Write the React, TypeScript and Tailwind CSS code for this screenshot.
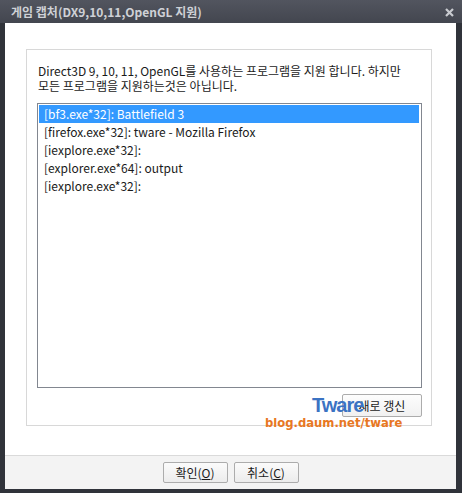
const programs = [
  { id: 1, name: "[bf3.exe*32]: Battlefield 3" },
  { id: 2, name: "[firefox.exe*32]: tware - Mozilla Firefox" },
  { id: 3, name: "[iexplore.exe*32]:" },
  { id: 4, name: "[explorer.exe*64]: output" },
  { id: 5, name: "[iexplore.exe*32]:" },
];

const kr = { fontFamily: '"Noto Sans CJK KR", "Noto Sans", sans-serif' };

export default function App() {
  const selectedId = 1;

  return (
    <div
      className="w-[462px] h-[493px] bg-[#30333a] flex flex-col relative overflow-hidden"
      style={kr}
    >
      {/* title bar */}
      <div className="h-[23px] flex items-center justify-between bg-gradient-to-b from-[#52555f] to-[#43464f] pl-[11px] pr-[8px]">
        <span className="text-[12px] font-bold text-[#cfd1d6] leading-none">
          게임 캡처(DX9,10,11,OpenGL 지원)
        </span>
        <svg width="9" height="9" viewBox="0 0 9 9" className="mt-[1px]">
          <path d="M1 1L8 8M8 1L1 8" stroke="#c9cbd0" strokeWidth="2.2" />
        </svg>
      </div>

      <div className="flex-1 flex flex-col ml-[5px] mr-[6px] mb-[4px]">
        <div className="h-[432px] bg-white pt-[26px] pl-[21px]">
          <div className="w-[406px] h-[377px] border border-[#d8d8d8] pt-[13px] pl-[10px] pr-[9px] pb-[8px] flex flex-col">
            <div className="text-[12px] leading-[15px] text-[#1a1a1a] ml-[1px]">
              <div>Direct3D 9, 10, 11, OpenGL를 사용하는 프로그램을 지원 합니다. 하지만</div>
              <div>모든 프로그램을 지원하는것은 아닙니다.</div>
            </div>
            <div className="mt-[10px] h-[285px] border border-[#828790] p-[1px] pr-[2px]">
              {programs.map((p) => (
                <div
                  key={p.id}
                  className={
                    p.id === selectedId
                      ? "h-[18px] flex items-center pl-[5px] text-[12px] bg-[#3399ff] text-white"
                      : "h-[18px] flex items-center pl-[5px] text-[12px] text-[#1a1a1a]"
                  }
                >
                  {p.name}
                </div>
              ))}
            </div>
            <div className="mt-[6px] flex justify-end">
              <button className="w-[80px] h-[23px] border border-[#acacac] rounded-[2px] bg-gradient-to-b from-[#fdfdfd] to-[#f1f1f1] text-[12px] text-[#1a1a1a]">
                새로 갱신
              </button>
            </div>
          </div>
        </div>
        <div className="h-px bg-[#dadada]" />
        <div className="flex-1 bg-[#f3f3f3] flex justify-center gap-[6px] pt-[6px]">
          <button className="w-[65px] h-[21px] border border-[#acacac] rounded-[2px] bg-gradient-to-b from-[#fbfbfb] to-[#ececec] text-[12px] text-[#1a1a1a] leading-none">
            확인(<span className="underline">O</span>)
          </button>
          <button className="w-[65px] h-[21px] border border-[#acacac] rounded-[2px] bg-gradient-to-b from-[#fbfbfb] to-[#ececec] text-[12px] text-[#1a1a1a] leading-none">
            취소(<span className="underline">C</span>)
          </button>
        </div>
      </div>

      {/* blog watermark, drawn over the dialog */}
      <div
        className="absolute left-[312px] top-[395px] text-[20px] font-bold text-[#3b73c3] leading-none tracking-[-1px]"
        style={{ fontFamily: '"Liberation Sans", sans-serif' }}
      >
        Tware
      </div>
      <div
        className="absolute left-[265px] top-[418px] text-[11.6px] font-bold text-[#e87722] leading-none"
        style={{ fontFamily: '"DejaVu Sans", sans-serif' }}
      >
        blog.daum.net/tware
      </div>
    </div>
  );
}
